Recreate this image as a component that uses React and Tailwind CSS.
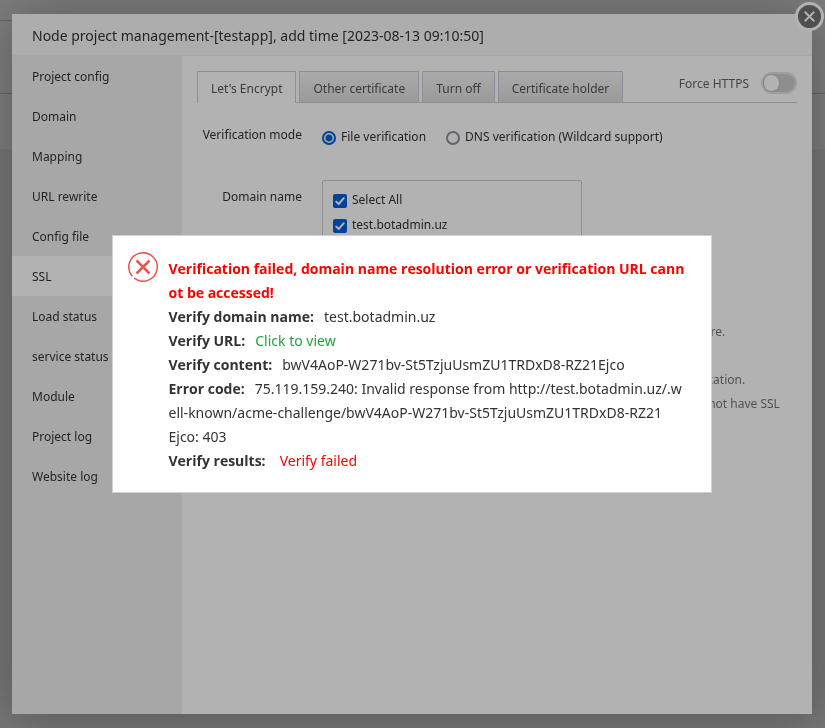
import { X } from "lucide-react";

const menu = [
  "Project config",
  "Domain",
  "Mapping",
  "URL rewrite",
  "Config file",
  "SSL",
  "Load status",
  "service status",
  "Module",
  "Project log",
  "Website log",
];

const tabs = ["Let's Encrypt", "Other certificate", "Turn off", "Certificate holder"];

const notes = [
  "Apply only after the domain is resolved, or the application will fail as it is used, see here.",
  "Let's Encrypt certificates are valid for three months and renew themselves",
  "Sites that sit behind a CDN or a 301 redirect can fail the file check or host name verification.",
  "Without a default SSL site, HTTPS requests may be answered for every site that does not have SSL",
];

function Tick({ id, label }) {
  return (
    <div className="flex h-[25px] items-center gap-[5px]">
      <span className="grid size-[14px] shrink-0 place-items-center">
        <input
          id={id}
          type="checkbox"
          defaultChecked
          className="col-start-1 row-start-1 size-[14px] appearance-none rounded-[2px] bg-[#0060df]"
        />
        <svg
          viewBox="0 0 14 14"
          className="pointer-events-none col-start-1 row-start-1 size-[14px]"
          fill="none"
          stroke="white"
          strokeWidth="2"
          strokeLinecap="round"
          strokeLinejoin="round"
        >
          <path d="M3.2 7.6 5.7 10 10.8 4.2" />
        </svg>
      </span>
      <label htmlFor={id} className="pb-0.5">{label}</label>
    </div>
  );
}

function Radio({ id, label, checked }) {
  return (
    <div className="flex items-center gap-[5px]">
      <input
        id={id}
        type="radio"
        name="mode"
        defaultChecked={checked}
        className="mt-0.5 size-[14px] shrink-0 appearance-none rounded-full border-2 border-[#8f8f9d] bg-white checked:border-[#0060df] checked:bg-[radial-gradient(circle,#0060df_3px,white_4px)]"
      />
      <label htmlFor={id}>{label}</label>
    </div>
  );
}

function Row({ label, children }) {
  return (
    <div className="flex gap-5">
      <span className="w-[105px] shrink-0 text-right whitespace-nowrap">{label}</span>
      {children}
    </div>
  );
}

function ProjectDialog() {
  return (
    <section className="relative flex w-full flex-col bg-white shadow-[1px_1px_50px_rgba(0,0,0,0.3)]">
      <button
        aria-label="Close"
        className="absolute -top-3 -right-3 grid size-[29px] place-items-center rounded-full border-[3px] border-white bg-[#727272] text-white"
      >
        <X size={17} strokeWidth={2.6} />
      </button>
      <h1 className="flex h-[42px] shrink-0 items-center border-b border-[#eee] bg-[#f8f8f8] px-5 pt-0.5 text-[14px] text-[#333]">
        Node project management-[testapp], add time [2023-08-13 09:10:50]
      </h1>
      <div className="flex grow">
        <nav className="w-[170px] shrink-0 bg-[#f0f0f0]">
          {menu.map((m) => (
            <a
              key={m}
              href="#"
              className={
                m === "SSL"
                  ? "flex h-10 items-center bg-white px-5 pt-0.5 whitespace-nowrap"
                  : "flex h-10 items-center px-5 pt-0.5 whitespace-nowrap"
              }
            >
              {m}
            </a>
          ))}
        </nav>
        <main className="min-w-0 grow p-[15px]">
          <div className="flex h-8 justify-between border-b border-[#cacad9]">
            <div className="flex h-8 gap-[3px]">
              {tabs.map((t, i) => (
                <button
                  key={t}
                  className={
                    i === 0
                      ? "border border-b-0 border-[#cacad9] bg-white px-[13px] pt-0.5 whitespace-nowrap text-[#555]"
                      : "border border-[#cacad9] bg-linear-to-b from-[#f4f4f4] to-[#dedede] px-[13px] pt-1 whitespace-nowrap text-[#555]"
                  }
                >
                  {t}
                </button>
              ))}
            </div>
            <div className="flex h-6 items-center gap-3 text-[#666]">
              <label htmlFor="https" className="pt-0.5">Force HTTPS</label>
              <input
                id="https"
                type="checkbox"
                className="h-[22px] w-9 appearance-none rounded-full border-2 border-[#e2e2e2] bg-[#ccc] before:block before:h-[18px] before:w-[17px] before:rounded-full before:border before:border-[#bbb] before:bg-white before:content-['']"
              />
            </div>
          </div>
          <div className="mt-[22px] flex flex-col gap-10">
            <Row label="Verification mode">
              <div className="mt-0.5 flex gap-5 whitespace-nowrap">
                <Radio id="file" label="File verification" checked />
                <Radio id="dns" label="DNS verification (Wildcard support)" />
              </div>
            </Row>
            <Row label="Domain name">
              <div className="-mt-[7px] h-[120px] w-[260px] rounded-[2px] border border-[#ccc] px-2.5 pt-[7px]">
                <Tick id="all" label="Select All" />
                <Tick id="test" label="test.botadmin.uz" />
              </div>
            </Row>
          </div>
          <ul className="mt-5 pl-[35px] leading-6 whitespace-nowrap text-[#777]">
            {notes.map((n) => (
              <li key={n}>{n}</li>
            ))}
          </ul>
        </main>
      </div>
    </section>
  );
}

function ErrorPopup() {
  return (
    <section
      role="alertdialog"
      aria-label="Verification failed"
      className="flex w-full max-w-[600px] gap-[11px] border border-[#d0d0d0] bg-white pt-[21px] pr-4 pb-[19px] pl-[15px] text-[14px] leading-6 break-all text-[#333]"
    >
      <svg viewBox="0 0 30 30" className="-mt-[5px] size-[30px] shrink-0" fill="none" stroke="#e8584a">
        <path d="M4.3 24.3A14.2 14.2 0 1 1 6.3 26.2" strokeWidth="1.5" />
        <path d="m8.5 8.5 13 13m0-13-13 13" strokeWidth="2.5" />
      </svg>
      <div className="min-w-0 [&_b]:font-['Open_Sans']">
        <p className="text-[#f00]">
          <b>
            Verification failed, domain name resolution error or verification URL cann
            <br />
            ot be accessed!
          </b>
        </p>
        <p><b className="mr-2.5">Verify domain name:</b>test.botadmin.uz</p>
        <p><b className="mr-2.5">Verify URL:</b><a href="#" className="text-[#20a53a]">Click to view</a></p>
        <p><b className="mr-2.5">Verify content:</b>bwV4AoP-W271bv-St5TzjuUsmZU1TRDxD8-RZ21Ejco</p>
        <p>
          <b className="mr-2.5">Error code:</b>
          75.119.159.240: Invalid response from http://test.botadmin.uz/.w
          <br />
          ell-known/acme-challenge/bwV4AoP-W271bv-St5TzjuUsmZU1TRDxD8-RZ21
          <br />
          Ejco: 403
        </p>
        <p><b className="mr-3.5">Verify results:</b><span className="text-[#f00]">Verify failed</span></p>
      </div>
    </section>
  );
}

export default function App() {
  return (
    <div className="min-h-screen bg-[#f0f0f0] font-['Noto_Sans',sans-serif] text-[12px] leading-5 text-[#333]">
      <div className="h-[21px] border-b border-[#ccc] bg-white" />
      <div className="h-[73px] border-b border-[#ccc] bg-white" />
      <div className="h-[55px] bg-white" />
      <div className="fixed inset-0 flex overflow-hidden bg-black/30 py-[14px] pr-[13px] pl-3">
        <ProjectDialog />
      </div>
      <div className="fixed inset-0 flex items-center justify-center bg-black/30 pr-0.5">
        <ErrorPopup />
      </div>
    </div>
  );
}
